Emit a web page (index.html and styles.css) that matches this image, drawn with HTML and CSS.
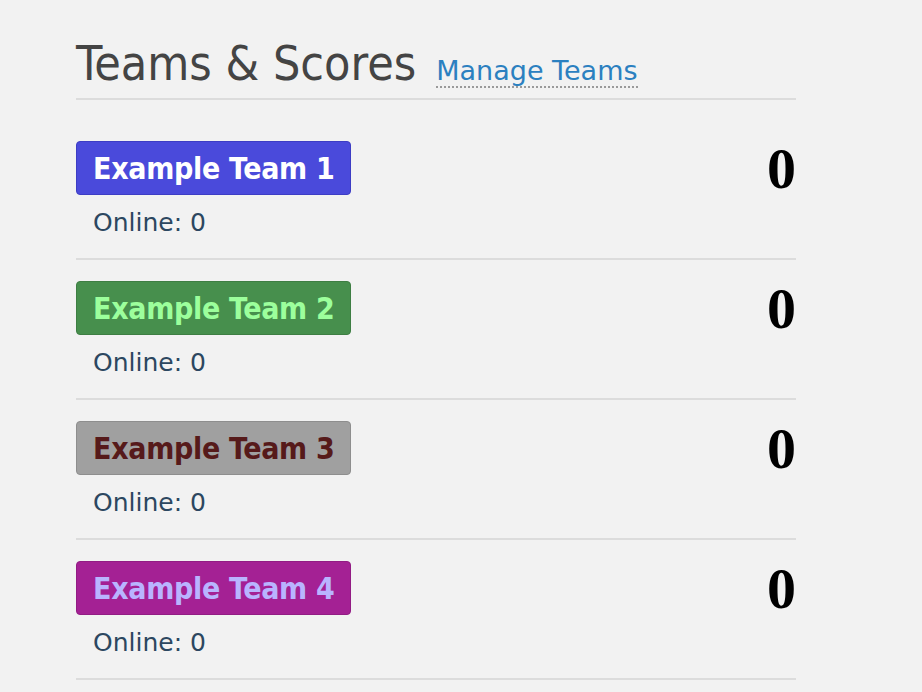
FILE: index.html
```html
<!DOCTYPE html>
<html lang="en">
<head>
    <meta charset="UTF-8">
    <title>Teams &amp; Scores</title>
    <link rel="stylesheet" href="styles.css">
</head>
<body>
    <div id="scoreboard">
        <div class="header">
            <h1>Teams &amp; Scores</h1>
            <a href="#" class="manage">Manage Teams</a>
        </div>

        <div class="team">
            <div class="info">
                <span class="badge team1">Example Team 1</span>
                <div class="online">Online: 0</div>
            </div>
            <div class="score">0</div>
        </div>
        <div class="team">
            <div class="info">
                <span class="badge team2">Example Team 2</span>
                <div class="online">Online: 0</div>
            </div>
            <div class="score">0</div>
        </div>
        <div class="team">
            <div class="info">
                <span class="badge team3">Example Team 3</span>
                <div class="online">Online: 0</div>
            </div>
            <div class="score">0</div>
        </div>
        <div class="team">
            <div class="info">
                <span class="badge team4">Example Team 4</span>
                <div class="online">Online: 0</div>
            </div>
            <div class="score">0</div>
        </div>
    </div>
</body>
</html>
```

FILE: styles.css
```css
body {
    margin: 0;
    background-color: #f2f2f2;
    font-family: "DejaVu Sans", "Liberation Sans", sans-serif;
}

#scoreboard {
    width: 720px;
    margin-left: 76px;
    padding-top: 34px;
}

.header {
    display: flex;
    align-items: baseline;
    gap: 20px;
    padding-bottom: 6px;
    margin-bottom: 20px;
    border-bottom: 2px solid #dcdcdc;
}

h1 {
    margin: 0;
    font-family: "DejaVu Sans Condensed", "DejaVu Sans", sans-serif;
    font-size: 48px;
    line-height: 58px;
    font-weight: normal;
    color: #444444;
}

.manage {
    font-size: 27px;
    color: #2b80c0;
    text-decoration: none;
    border-bottom: 2px dotted #9a9a9a;
}

.team {
    box-sizing: border-box;
    display: flex;
    justify-content: space-between;
    height: 140px;
    padding-top: 21px;
    border-bottom: 2px solid #dcdcdc;
}

.badge {
    display: inline-block;
    height: 50px;
    line-height: 50px;
    padding: 2px 16px 0;
    font-family: "DejaVu Sans Condensed", "DejaVu Sans", sans-serif;
    font-size: 30px;
    font-weight: bold;
    letter-spacing: -0.3px;
    border: 1px solid;
    border-radius: 4px;
}

.team1 {
    background-color: #4a4adb;
    border-color: #3d3dc4;
    color: #ffffff;
}

.team2 {
    background-color: #478f4d;
    border-color: #3e7e43;
    color: #9cff9c;
}

.team3 {
    background-color: #a0a0a0;
    border-color: #8e8e8e;
    color: #561a1a;
}

.team4 {
    background-color: #a42194;
    border-color: #921c84;
    color: #b9b4ff;
}

.online {
    margin-top: 13px;
    padding-left: 17px;
    font-size: 25px;
    line-height: 30px;
    color: #2c4760;
}

.score {
    margin-top: -1px;
    font-family: "Liberation Serif", serif;
    font-weight: bold;
    font-size: 58px;
    line-height: 1;
    color: #000000;
}
```
